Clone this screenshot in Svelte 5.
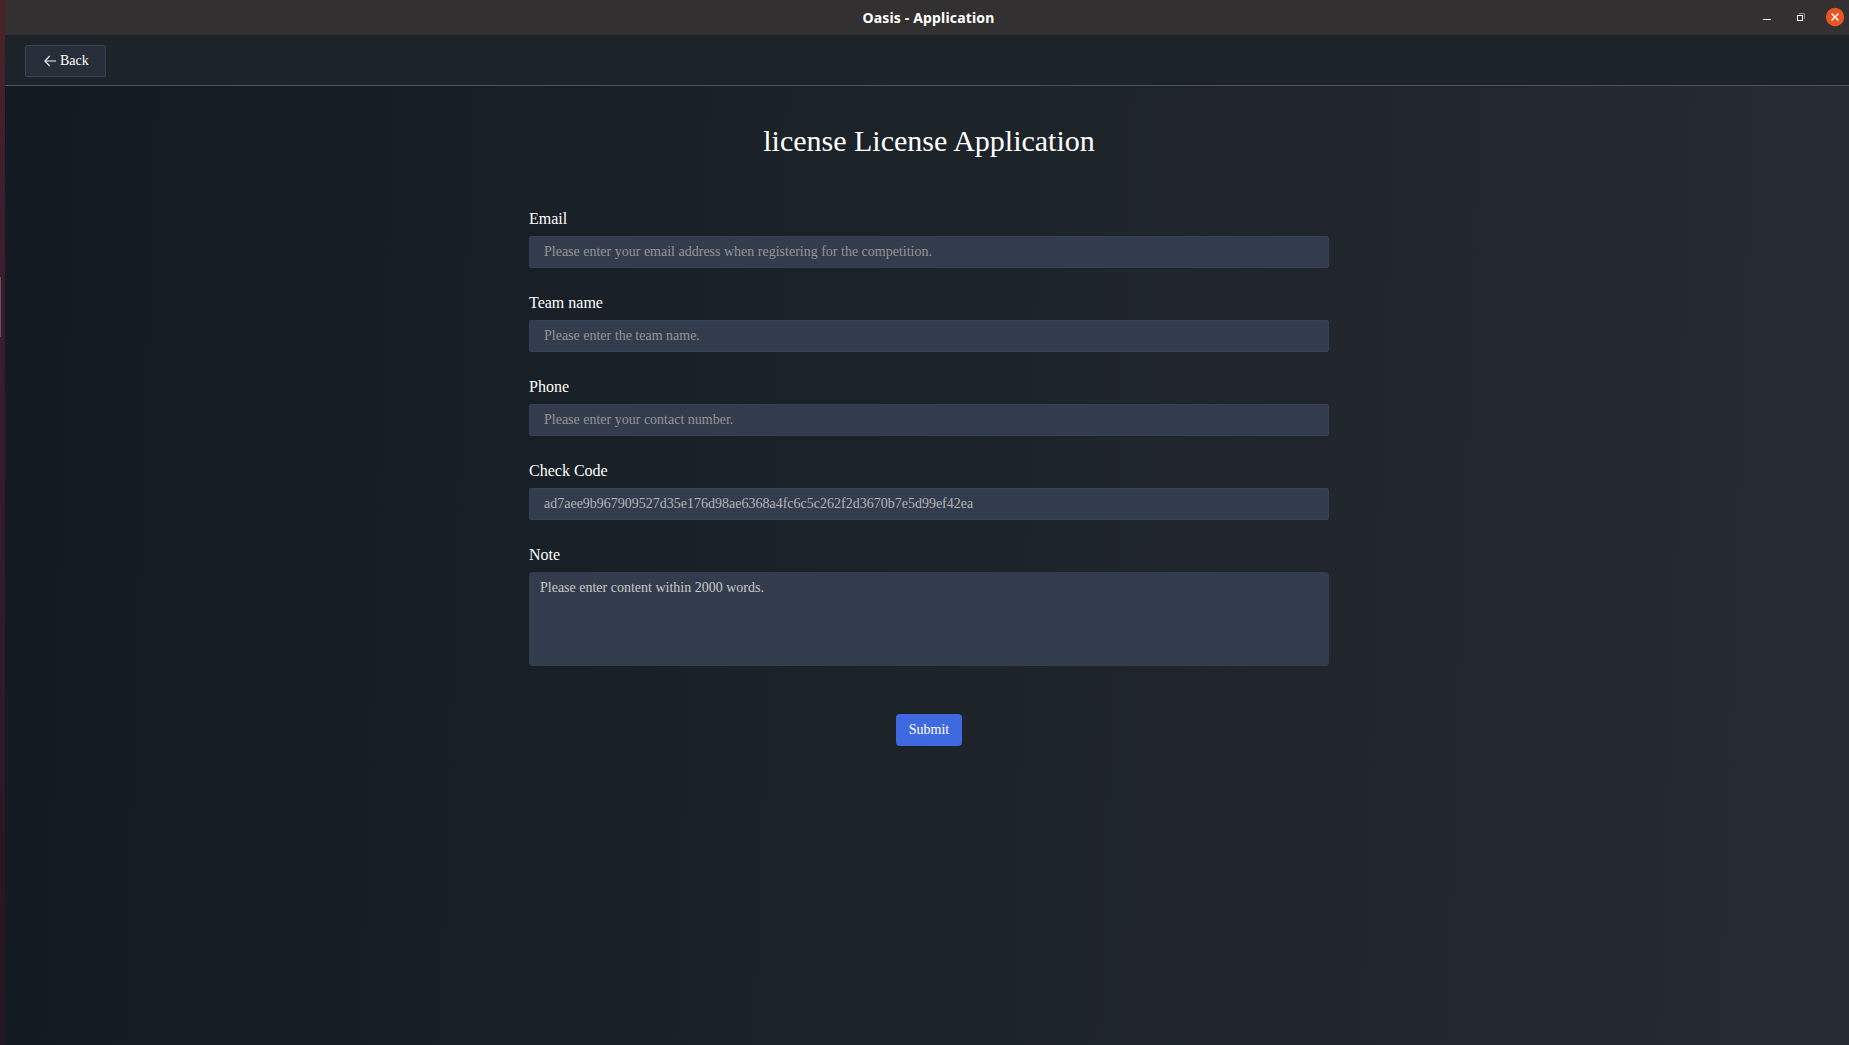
<script>
  const fields = [
    { id: 'email', label: 'Email', placeholder: 'Please enter your email address when registering for the competition.' },
    { id: 'team', label: 'Team name', placeholder: 'Please enter the team name.' },
    { id: 'phone', label: 'Phone', placeholder: 'Please enter your contact number.' },
    {
      id: 'code',
      label: 'Check Code',
      value: 'ad7aee9b967909527d35e176d98ae6368a4fc6c5c262f2d3670b7e5d99ef42ea',
      readonly: true
    }
  ];
</script>

<div class="desktop">
  <div class="edge"><span class="handle"></span></div>
  <div class="window">
    <header class="titlebar">
      <span class="window-title">Oasis - Application</span>
      <div class="controls">
        <svg width="12" height="12" viewBox="0 0 12 12" aria-label="Minimize">
          <path d="M2 8.500h8" stroke="#fff" />
        </svg>
        <svg width="12" height="12" viewBox="0 0 12 12" fill="none" aria-label="Restore">
          <path d="M4 2.500h5.500v5.500" stroke="#8f8e8d" />
          <rect x="2.500" y="4.500" width="5" height="5" stroke="#fff" />
        </svg>
        <svg class="close" width="20" height="20" viewBox="0 0 20 20" fill="none" aria-label="Close">
          <circle cx="10" cy="10" r="9.200" fill="#e95420" />
          <path d="M6.500 6.500l7 7M13.500 6.500l-7 7" stroke="#fff" stroke-width="1.500" />
        </svg>
      </div>
    </header>
    <nav class="toolbar">
      <button class="back">
        <svg width="12" height="12" viewBox="0 0 12 12" fill="none">
          <path d="M1 6h11" stroke="#a9adb1" stroke-width="1.600" />
          <path d="M5.700 1L0.900 6L5.700 11" stroke="#fff" stroke-width="1.100" />
        </svg>
        <span>Back</span>
      </button>
    </nav>
    <main>
      <h1>license License Application</h1>
      <form>
        {#each fields as f (f.id)}
          <div class="field">
            <label for={f.id}>{f.label}</label>
            <input id={f.id} placeholder={f.placeholder} value={f.value ?? ''} readonly={f.readonly} />
          </div>
        {/each}
        <div class="field">
          <label for="note">Note</label>
          <textarea id="note" placeholder="Please enter content within 2000 words."></textarea>
        </div>
        <button class="submit" type="button">Submit</button>
      </form>
    </main>
  </div>
</div>

<style>
  :global(body) {
    overflow: hidden;
    background: #1b2228;
  }
  .desktop {
    display: flex;
    height: 1045px;
    font-family: 'Liberation Serif', serif;
    color: #fff;
  }
  .edge {
    width: 5px;
    flex: none;
    box-sizing: border-box;
    padding-top: 277px;
    background: linear-gradient(#4b2124 0, #44202a 100px, #3c1b30 300px, #351a2e 500px, #24161f 1045px);
  }
  .handle {
    display: block;
    width: 1px;
    height: 60px;
    background: #6b5360;
  }
  .window {
    flex: 1;
    display: flex;
    flex-direction: column;
    min-width: 0;
  }
  .titlebar {
    height: 35px;
    flex: none;
    display: grid;
    grid-template-columns: 1fr auto 1fr;
    align-items: center;
    background: #333031;
    box-sizing: border-box;
    padding: 0 0 1px 3px;
  }
  .window-title {
    grid-column: 2;
    padding-top: 1px;
    font: bold 14px/20px 'Noto Sans', sans-serif;
    letter-spacing: 0.16px;
  }
  .controls {
    display: flex;
    align-items: center;
    justify-content: flex-end;
    padding-right: 4px;
  }
  .controls svg {
    margin-right: 22px;
  }
  .controls svg:nth-child(2) {
    margin-right: 18px;
  }
  .controls .close {
    margin-right: 0;
  }
  .toolbar {
    height: 51px;
    flex: none;
    box-sizing: border-box;
    padding: 10px 20px;
    background: #1c2329;
    border-bottom: 1px solid #43566c;
  }
  button {
    font: 14px/20px 'Liberation Serif', serif;
    color: #fff;
    box-sizing: border-box;
    height: 32px;
  }
  .back {
    display: flex;
    align-items: center;
    gap: 4px;
    width: 81px;
    padding: 0 0 0 18px;
    background: #282e39;
    border: 1px solid #3a4252;
    border-radius: 2px;
  }
  main {
    flex: 1;
    padding-left: 4px;
    display: flex;
    flex-direction: column;
    align-items: center;
    background: linear-gradient(92deg, #131a22 0%, #1b2228 45%, #20262c 70%, #272b33 100%);
  }
  h1 {
    margin: 35px 0 0;
    font-size: 30px;
    line-height: 40px;
    font-weight: 400;
  }
  form {
    width: 800px;
    margin-top: 48px;
    display: flex;
    flex-direction: column;
  }
  .field {
    display: flex;
    flex-direction: column;
    margin-bottom: 25px;
  }
  label {
    font-size: 16px;
    line-height: 20px;
    margin-bottom: 7px;
  }
  input,
  textarea {
    box-sizing: border-box;
    width: 100%;
    font: 14px/20px 'Liberation Serif', serif;
    background: #333c4c;
    outline: none;
    margin: 0;
  }
  input {
    height: 32px;
    padding: 0 14px;
    border: 1px solid #33405b;
    border-radius: 2px;
    color: #b2b4b8;
  }
  input::placeholder {
    color: #959595;
    opacity: 1;
  }
  textarea {
    display: block;
    height: 94px;
    padding: 6px 11px;
    border: 0;
    border-radius: 4px;
    resize: none;
  }
  textarea::placeholder {
    color: #c9c9c9;
    opacity: 1;
  }
  .submit {
    align-self: center;
    margin-top: 23px;
    width: 66px;
    padding: 0 0 1px;
    background: #3f69e0;
    border: 0;
    border-radius: 4px;
  }
</style>
